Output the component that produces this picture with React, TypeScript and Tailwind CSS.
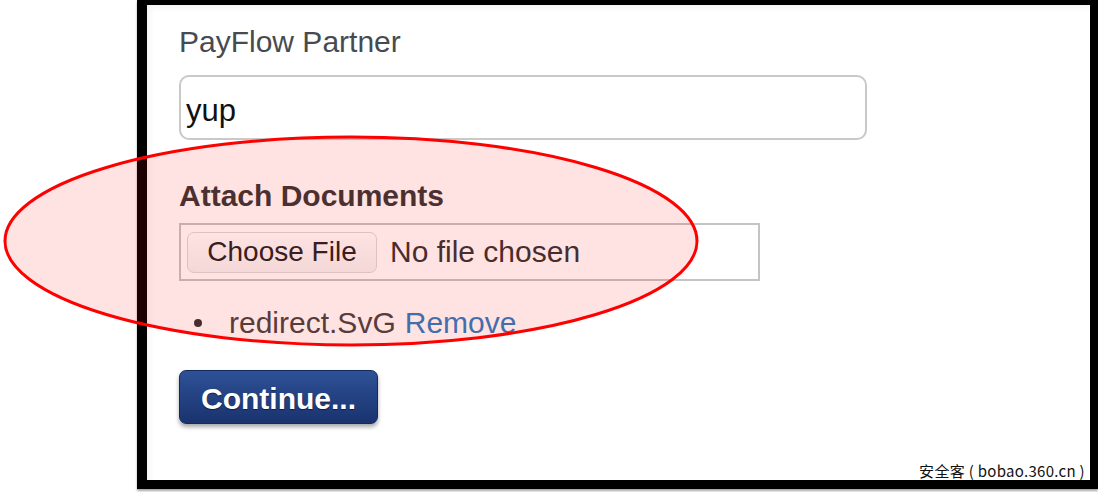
import React from "react";

const font = "font-['Liberation_Sans',Arial,Helvetica,sans-serif]";

export default function App() {
  return (
    <div className={`relative w-[1098px] h-[492px] overflow-hidden bg-white ${font}`}>
      <div className="ml-[137px] h-[489px] border-l-[10px] border-t-[5px] border-r-[8px] border-b-[9px] border-black bg-white shadow-[0_2px_2px_rgba(0,0,0,0.35)]">
        <div className="h-full pl-[32px] pt-[20px] shadow-[inset_6px_6px_10px_-6px_rgba(0,0,0,0.08)]">
          <label className="block text-[30px] leading-[34px] text-[#474b50]">PayFlow Partner</label>
          <div className="mt-[16px] h-[65px] w-[688px] rounded-[10px] border-2 border-[#c9c9c9] pl-[5px] pt-[17px]">
            <span className="block text-[31px] leading-[34px] text-[#111]">yup</span>
          </div>

          <h3 className="mt-[39px] text-[30px] font-bold leading-[34px] text-[#363636]">Attach Documents</h3>
          <div className="mt-[10px] flex h-[58px] w-[581px] items-center border-2 border-[#c4c4c4] pl-[6px]">
            <div className="flex h-[41px] w-[190px] items-center justify-center rounded-[7px] border border-[#dadada] bg-gradient-to-b from-white to-[#f3f3f3] text-[28px] leading-[34px] text-[#222]">
              Choose File
            </div>
            <span className="ml-[13px] text-[30px] leading-[34px] text-[#333]">No file chosen</span>
          </div>

          <ul className="mt-[25px]">
            <li className="flex items-center text-[30px] leading-[34px]">
              <span className="ml-[15px] h-[8px] w-[8px] rounded-full bg-[#333]" />
              <span className="ml-[27px] text-[#444]">redirect.SvG</span>
              <a className="ml-[9px] text-[#2d7cc0]">Remove</a>
            </li>
          </ul>

          <button className="mt-[30px] flex h-[54px] w-[199px] items-center justify-center rounded-[7px] border border-[#14295c] bg-gradient-to-b from-[#2e5196] to-[#1a336f] pt-[3px] text-[30px] font-bold leading-[34px] text-white shadow-[0_3px_4px_rgba(0,0,0,0.35)] [text-shadow:0_1px_1px_rgba(0,0,0,0.5)]">
            Continue...
          </button>
        </div>
      </div>

      {/* red annotation ellipse */}
      <svg className="pointer-events-none absolute left-0 top-0" width="1098" height="492">
        <ellipse cx="351" cy="241" rx="346" ry="104" fill="rgba(255,0,0,0.11)" stroke="#ff0000" strokeWidth="3" />
      </svg>

      <div className="absolute right-[13px] top-[462px] font-['Noto_Sans_CJK_SC',sans-serif] text-[15px] leading-[18px] tracking-[0.3px] text-[#111]">
        安全客 ( bobao.360.cn )
      </div>
    </div>
  );
}
